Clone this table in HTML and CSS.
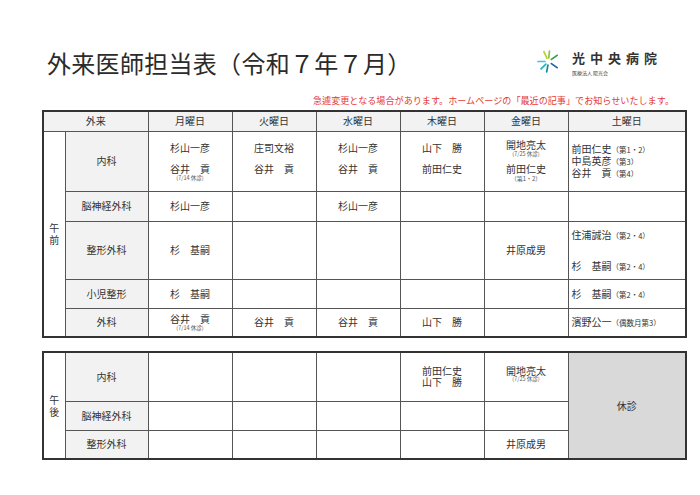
FILE: index.html
```html
<!DOCTYPE html>
<html lang="ja">
<head>
<meta charset="utf-8">
<title>外来医師担当表</title>
<link rel="stylesheet" href="styles.css">
</head>
<body>
<div class="page">
  <header class="top">
    <h1 class="title">外来医師担当表（令和７年７月）</h1>
    <div class="logo">
      <svg class="mark" viewBox="0 0 24 24" width="23" height="23">
        <g stroke-width="1.8" stroke-linecap="round" fill="none">
          <line x1="10.4" y1="8.6" x2="7.2" y2="1.6" stroke="#b8cf32"/>
          <line x1="12.3" y1="8.3" x2="13.0" y2="1.2" stroke="#8dc63f"/>
          <line x1="15.0" y1="9.8" x2="21.0" y2="5.6" stroke="#2f9c4a"/>
          <line x1="15.0" y1="14.2" x2="21.0" y2="18.4" stroke="#1f5fa8"/>
          <line x1="11.4" y1="15.7" x2="10.1" y2="22.8" stroke="#178a9e"/>
          <line x1="9.3" y1="14.7" x2="4.2" y2="19.8" stroke="#28b4c8"/>
          <line x1="8.3" y1="12.0" x2="1.0" y2="12.0" stroke="#49c0e0"/>
        </g>
      </svg>
      <div class="logo-text">
        <div class="logo-name">光中央病院</div>
        <div class="logo-sub">医療法人 陽光会</div>
      </div>
    </div>
  </header>
  <p class="notice">急遽変更となる場合があります。ホームページの「最近の記事」でお知らせいたします。</p>

  <table class="sched am">
    <colgroup>
      <col class="c-half"><col class="c-dept"><col class="c-day"><col class="c-day"><col class="c-day"><col class="c-day"><col class="c-day"><col class="c-sat">
    </colgroup>
    <tr class="r-head">
      <th colspan="2">外来</th><th>月曜日</th><th>火曜日</th><th>水曜日</th><th>木曜日</th><th>金曜日</th><th>土曜日</th>
    </tr>
    <tr class="r-naika">
      <td rowspan="5" class="half">午<br>前</td>
      <td class="dept">内科</td>
      <td class="tp"><div class="a">杉山一彦</div><div class="b">谷井　貢<div class="note">(7/14 休診)</div></div></td>
      <td class="tp"><div class="a">庄司文裕</div><div class="b">谷井　貢</div></td>
      <td class="tp"><div class="a">杉山一彦</div><div class="b">谷井　貢</div></td>
      <td class="tp"><div class="a">山下　勝</div><div class="b">前田仁史</div></td>
      <td class="tp"><div class="a tight">開地亮太<div class="note">(7/25 休診)</div></div><div class="b">前田仁史<div class="note2">（第1・2）</div></div></td>
      <td class="sat"><div class="sl">前田仁史<span class="wk">（第1・2）</span></div><div class="sl">中島英彦<span class="wk">（第3）</span></div><div class="sl">谷井　貢<span class="wk">（第4）</span></div></td>
    </tr>
    <tr class="r-short">
      <td class="dept">脳神経外科</td>
      <td>杉山一彦</td><td></td><td>杉山一彦</td><td></td><td></td><td class="sat"></td>
    </tr>
    <tr class="r-seikei">
      <td class="dept">整形外科</td>
      <td>杉　基嗣</td><td></td><td></td><td></td><td>井原成男</td>
      <td class="sat"><div class="sl">住浦誠治<span class="wk">（第2・4）</span></div><div class="sl gap">杉　基嗣<span class="wk">（第2・4）</span></div></td>
    </tr>
    <tr class="r-shoni">
      <td class="dept">小児整形</td>
      <td>杉　基嗣</td><td></td><td></td><td></td><td></td>
      <td class="sat"><div class="sl">杉　基嗣<span class="wk">（第2・4）</span></div></td>
    </tr>
    <tr class="r-geka">
      <td class="dept">外科</td>
      <td><div class="nm">谷井　貢</div><div class="note">(7/14 休診)</div></td>
      <td>谷井　貢</td><td>谷井　貢</td><td>山下　勝</td><td></td>
      <td class="sat"><div class="sl">濱野公一<span class="wk">（偶数月第3）</span></div></td>
    </tr>
  </table>

  <table class="sched pm">
    <colgroup>
      <col class="c-half"><col class="c-dept"><col class="c-day"><col class="c-day"><col class="c-day"><col class="c-day"><col class="c-day"><col class="c-sat">
    </colgroup>
    <tr class="r-pnaika">
      <td rowspan="3" class="half">午<br>後</td>
      <td class="dept">内科</td>
      <td></td><td></td><td></td>
      <td class="tp2"><div class="sl2">前田仁史</div><div class="sl2">山下　勝</div></td>
      <td class="tp2"><div class="sl2">開地亮太</div><div class="note">(7/25 休診)</div></td>
      <td rowspan="3" class="closed">休診</td>
    </tr>
    <tr class="r-prow">
      <td class="dept">脳神経外科</td>
      <td></td><td></td><td></td><td></td><td></td>
    </tr>
    <tr class="r-prow">
      <td class="dept">整形外科</td>
      <td></td><td></td><td></td><td></td><td>井原成男</td>
    </tr>
  </table>
</div>
</body>
</html>
```

FILE: styles.css
```css
html, body {
  margin: 0;
  padding: 0;
  background: #ffffff;
}
body {
  font-family: "Noto Sans CJK JP", "Noto Sans", sans-serif;
  color: #333333;
}
.page {
  width: 641px;
  padding-left: 42px;
}
.top {
  display: flex;
  justify-content: space-between;
  align-items: flex-start;
  padding-top: 47px;
  height: 33px;
}
.title {
  margin: 0 0 0 5px;
  font-size: 24px;
  line-height: 32px;
  font-weight: 400;
  letter-spacing: 0.3px;
  color: #2b2b2b;
}
.logo {
  display: flex;
  align-items: flex-start;
  gap: 12px;
  margin-right: 21px;
  padding-top: 3px;
}
.mark {
  display: block;
}
.logo-text {
  display: flex;
  flex-direction: column;
}
.logo-name {
  font-size: 13px;
  line-height: 16px;
  font-weight: 700;
  letter-spacing: 5px;
  color: #333;
}
.logo-sub {
  font-size: 5px;
  line-height: 6px;
  margin-top: 4px;
  color: #444;
}
.notice {
  margin: 14px 9px 4px 0;
  text-align: right;
  font-size: 9.1px;
  line-height: 12px;
  color: #e53935;
}
.sched {
  width: 641px;
  border-collapse: collapse;
  table-layout: fixed;
  border: 2px solid #333;
}
.sched.pm {
  margin-top: 13px;
}
.c-half { width: 22px; }
.c-dept { width: 83px; }
.c-day { width: 84px; }
.c-sat { width: 118px; }
.sched th,
.sched td {
  border: 1px solid #555;
  padding: 0;
  font-size: 10px;
  line-height: 12px;
  font-weight: 400;
  text-align: center;
  vertical-align: middle;
  color: #333;
}
.sched th {
  background: #f2f2f2;
}
.dept {
  background: #f2f2f2;
}
.half {
  background: #ffffff;
  line-height: 12px;
}
.r-head { height: 20px; }
.r-naika { height: 60px; }
.r-short { height: 30px; }
.r-seikei { height: 58px; }
.r-shoni { height: 29px; }
.r-geka { height: 29px; }
.r-pnaika { height: 49px; }
.r-prow { height: 29px; }

.sched td.tp {
  vertical-align: top;
}
.tp .a {
  box-sizing: border-box;
  height: 31px;
  padding-top: 10px;
}
.tp .a.tight {
  padding-top: 7px;
}
.note {
  font-size: 5.5px;
  line-height: 7px;
  color: #555;
}
.note2 {
  font-size: 6px;
  line-height: 8px;
  color: #555;
}
.nm {
  line-height: 12px;
}
.sched td.sat {
  padding-left: 3px;
  text-align: left;
}
.sl {
  line-height: 11px;
}
.sl.gap {
  margin-top: 19px;
}
.wk {
  font-size: 7.5px;
}
.sched td.tp2 {
  vertical-align: top;
  padding-top: 12px;
}
.sl2 {
  line-height: 11px;
}
.sched td.closed {
  background: #d9d9d9;
}
```
